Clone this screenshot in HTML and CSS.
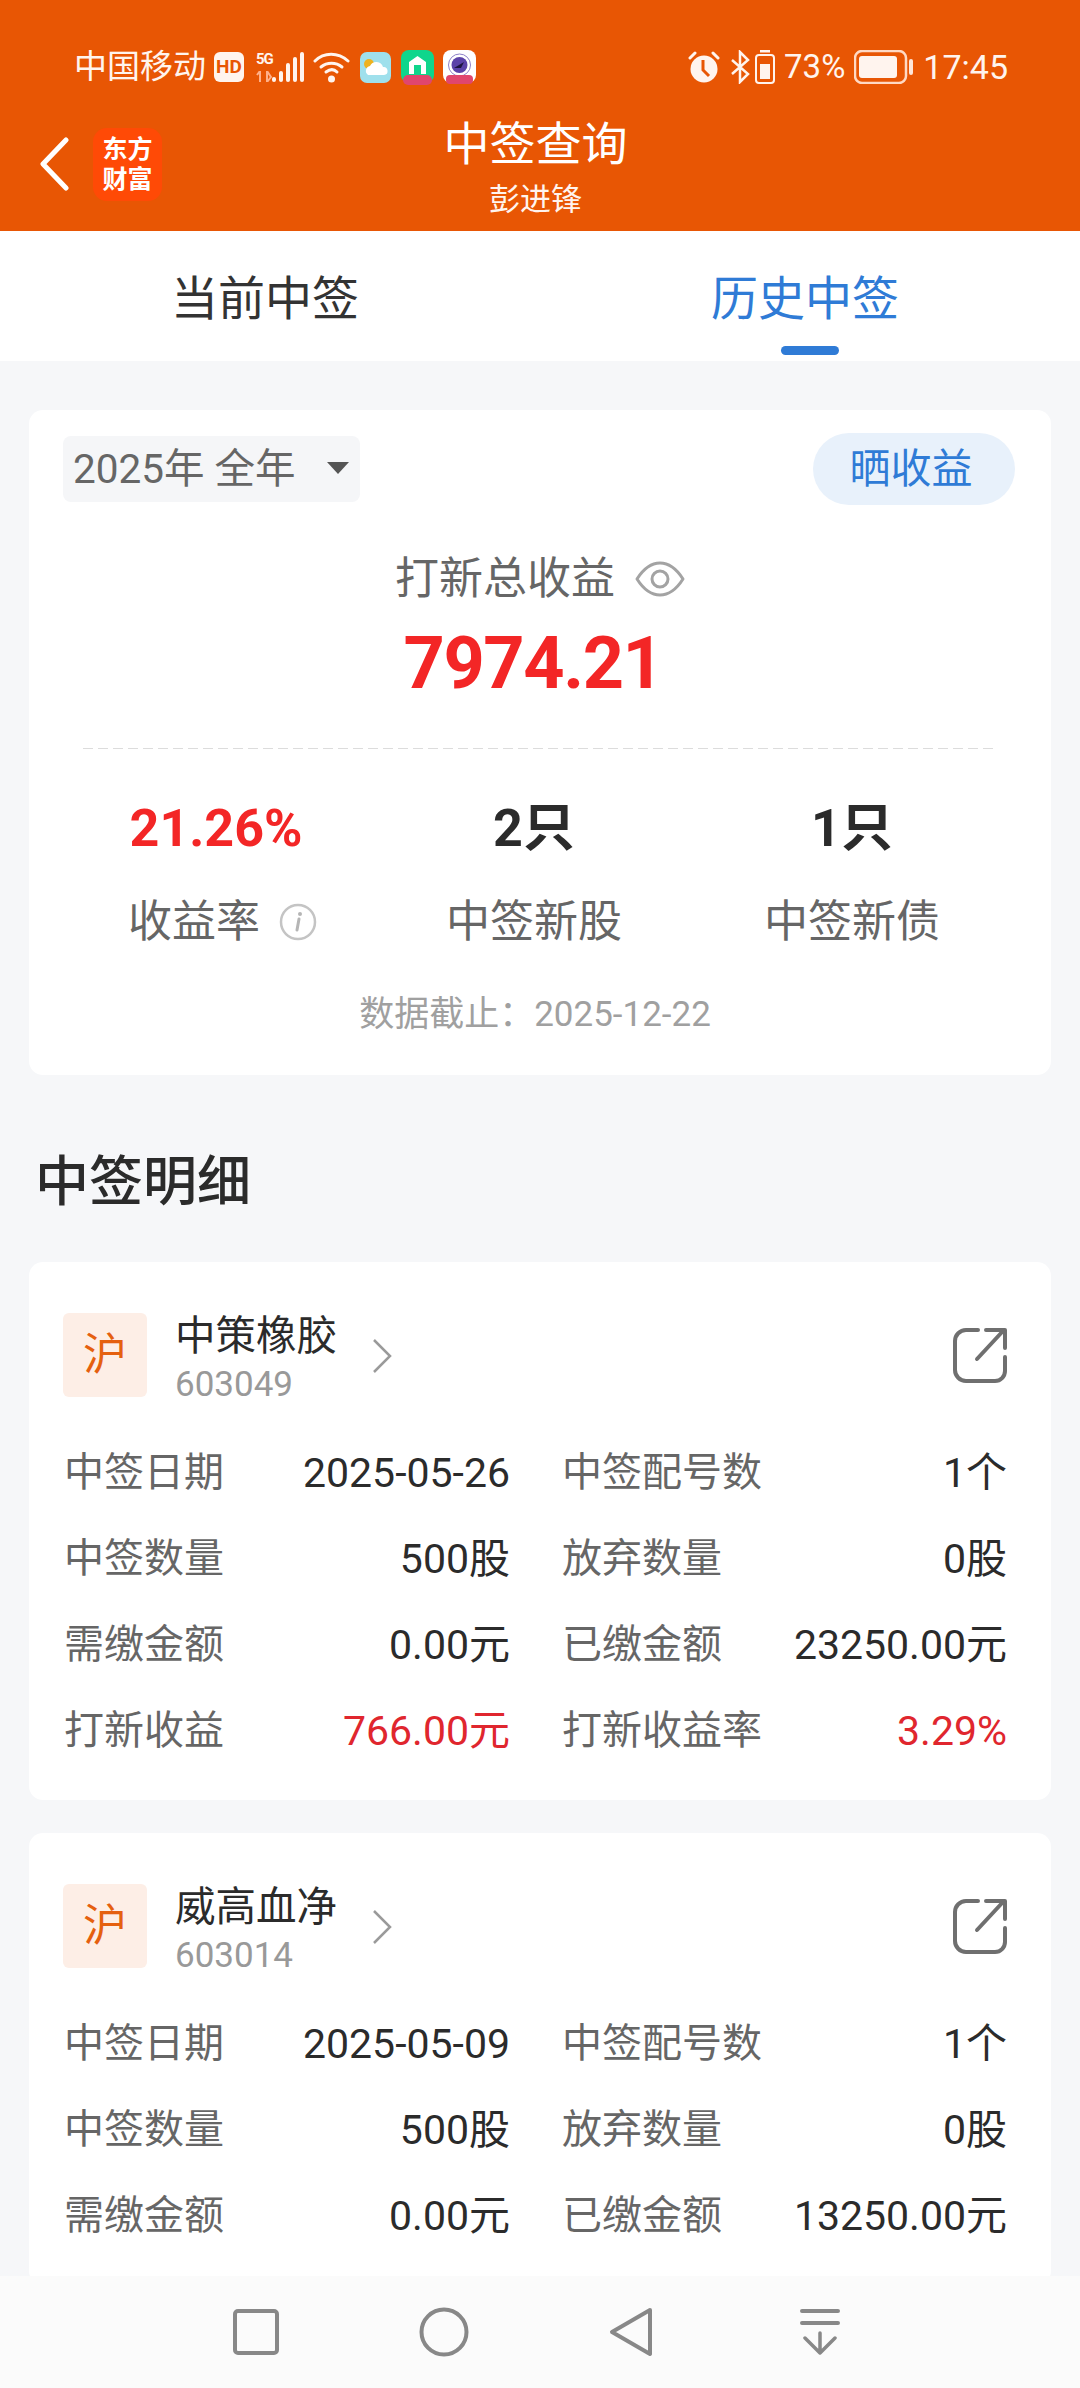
FILE: index.html
```html
<!DOCTYPE html>
<html lang="zh-CN">
<head>
  <meta charset="UTF-8">
  <title>中签查询</title>
  <link rel="stylesheet" href="styles.css">
</head>
<body>
  <header class="top">
    <div class="status">
      <div class="status-left">
        <span class="carrier">中国移动</span>
        <span class="hd">HD</span>
        <span class="net">
          <span class="net-5g">5G</span>
          <svg class="net-arrows" width="16" height="11" viewBox="0 0 16 11"><path d="M4 0v11M4 0L1 4M11 0v11l4-5z" fill="none" stroke="#ffb08a" stroke-width="2"/></svg>
        </span>
        <svg class="signal" width="33" height="32" viewBox="0 0 33 32"><g fill="#fff4ee"><rect x="0" y="26" width="4" height="5" rx="2"/><rect x="7" y="20" width="4" height="11" rx="2"/><rect x="14" y="12" width="4" height="19" rx="2"/><rect x="21" y="6" width="4" height="25" rx="2"/><rect x="28" y="1" width="4" height="30" rx="2"/></g></svg>
        <svg class="wifi" width="38" height="32" viewBox="0 0 38 32"><g fill="none" stroke="#fff4ee" stroke-width="3" stroke-linecap="round"><path d="M2 10C11 1 25 1 35 10"/><path d="M8 16c6-5 15-5 21 0"/></g><path d="M13 21c4-3 8-3 11 0" fill="none" stroke="#fff4ee" stroke-width="3" stroke-linecap="round"/><circle cx="18.500" cy="28" r="3.500" fill="#fff4ee"/></svg>
        <svg class="app" width="31" height="31" viewBox="0 0 31 31"><rect width="31" height="31" rx="7" fill="#9fe0ec"/><circle cx="9" cy="12" r="5" fill="#eeb21f"/><path d="M8 23a5 5 0 0 1 2-9 7 7 0 0 1 13 1 4 4 0 0 1 1 8z" fill="#fff"/></svg>
        <svg class="app app-b" width="33" height="35" viewBox="0 0 33 35"><rect width="33" height="33" rx="8" fill="#0fd68c"/><path d="M8 24V12l8.500-6 8.500 6v12h-5v-9h-7v9z" fill="#fff"/><rect x="2" y="25" width="29" height="10" rx="5" fill="#e0466e"/></svg>
        <svg class="app" width="33" height="34" viewBox="0 0 33 34"><rect width="33" height="33" rx="8" fill="#fff"/><circle cx="16.500" cy="15" r="11" fill="none" stroke="#8d80c8" stroke-width="1"/><circle cx="16.500" cy="15" r="8" fill="#5b42a8"/><path d="M11 18l10-6-3 6z" fill="#1d1440"/><rect x="3" y="25" width="27" height="9" rx="4" fill="#e0466e"/></svg>
      </div>
      <div class="status-right">
        <svg class="alarm" width="32" height="32" viewBox="0 0 32 32"><path d="M2 7l5-5M30 7l-5-5" stroke="#fff4ee" stroke-width="3" stroke-linecap="round"/><circle cx="16" cy="18" r="13.500" fill="#fff4ee"/><path d="M15 9v10l6 6" fill="none" stroke="#e85604" stroke-width="3"/></svg>
        <svg class="bt" width="19" height="34" viewBox="0 0 19 34"><path d="M1 10l16 14-8 8V2l8 8L1 24" fill="none" stroke="#fff4ee" stroke-width="2.500"/></svg>
        <svg class="minibat" width="20" height="34" viewBox="0 0 20 34"><rect x="5" y="0" width="10" height="2.500" fill="#fff4ee"/><rect x="1" y="5" width="18" height="28" rx="3" fill="none" stroke="#fff4ee" stroke-width="2"/><rect x="5" y="14" width="10" height="15" fill="#fff4ee"/></svg>
        <span class="pct">73%</span>
        <svg class="battery" width="60" height="34" viewBox="0 0 60 34"><rect x="1" y="1" width="51" height="32" rx="7" fill="none" stroke="#ffd9c4" stroke-width="2.500"/><rect x="5" y="6" width="38" height="22" rx="3" fill="#fff4ee"/><rect x="55" y="9" width="4" height="16" rx="2" fill="#ffe6d8"/></svg>
        <span class="clock">17:45</span>
      </div>
    </div>
    <div class="nav">
      <svg class="back" width="30" height="54" viewBox="0 0 30 54"><path d="M27 3L4 27l23 24" fill="none" stroke="#fff" stroke-width="5" stroke-linecap="round" stroke-linejoin="round"/></svg>
      <div class="logo">东方<br>财富</div>
      <div class="title">
        <div class="title-main">中签查询</div>
        <div class="title-sub">彭进锋</div>
      </div>
    </div>
  </header>

  <div class="tabs">
    <div class="tab">当前中签</div>
    <div class="tab active">历史中签</div>
  </div>

  <main class="content">
    <section class="card summary">
      <div class="summary-top">
        <div class="picker">2025年 全年<span class="caret"></span></div>
        <div class="share">晒收益</div>
      </div>
      <div class="total-label">打新总收益
        <svg class="eye" width="50" height="36" viewBox="0 0 50 36"><path d="M2 18C9 7 17 2 25 2s16 5 23 16c-7 11-15 16-23 16S9 29 2 18z" fill="none" stroke="#a3a3a3" stroke-width="3" stroke-linejoin="round"/><circle cx="25" cy="18" r="8" fill="none" stroke="#a3a3a3" stroke-width="3"/></svg>
      </div>
      <div class="total-value">7974.21</div>
      <div class="divider"></div>
      <div class="stats">
        <div class="stat">
          <div class="stat-value red">21.26%</div>
          <div class="stat-label stat-label-info">收益率
            <svg class="info" width="38" height="38" viewBox="0 0 38 38"><circle cx="19" cy="19" r="17" fill="none" stroke="#c4c4c4" stroke-width="2.500"/><path d="M20 16l-2 11" stroke="#b5b5b5" stroke-width="3" stroke-linecap="round"/><circle cx="21" cy="11" r="2" fill="#b5b5b5"/></svg>
          </div>
        </div>
        <div class="stat">
          <div class="stat-value">2只</div>
          <div class="stat-label">中签新股</div>
        </div>
        <div class="stat">
          <div class="stat-value">1只</div>
          <div class="stat-label">中签新债</div>
        </div>
      </div>
      <div class="note">数据截止：2025-12-22</div>
    </section>

    <h2 class="section-title">中签明细</h2>

    <section class="card stock">
      <div class="stock-head">
        <div class="market">沪</div>
        <div class="stock-info">
          <div class="stock-name">中策橡胶</div>
          <div class="stock-code">603049</div>
        </div>
        <svg class="more" width="22" height="36" viewBox="0 0 22 36"><path d="M3 2l16 16L3 34" fill="none" stroke="#9a9a9a" stroke-width="2.500"/></svg>
        <svg class="open" width="56" height="58" viewBox="0 0 56 58"><path d="M26 4H14A11 11 0 0 0 3 15v29a11 11 0 0 0 11 11h29a10 10 0 0 0 10-10V31" fill="none" stroke="#6f6f6f" stroke-width="4" stroke-linecap="round"/><path d="M25 33L51 5M34 4h19v18" fill="none" stroke="#6f6f6f" stroke-width="4" stroke-linecap="round" stroke-linejoin="round"/></svg>
      </div>
      <div class="rows">
        <span class="label">中签日期</span><span class="val">2025-05-26</span><span class="label label-b">中签配号数</span><span class="val">1个</span>
        <span class="label">中签数量</span><span class="val">500股</span><span class="label label-b">放弃数量</span><span class="val">0股</span>
        <span class="label">需缴金额</span><span class="val">0.00元</span><span class="label label-b">已缴金额</span><span class="val">23250.00元</span>
        <span class="label">打新收益</span><span class="val red">766.00元</span><span class="label label-b">打新收益率</span><span class="val red">3.29%</span>
      </div>
    </section>

    <section class="card stock">
      <div class="stock-head">
        <div class="market">沪</div>
        <div class="stock-info">
          <div class="stock-name">威高血净</div>
          <div class="stock-code">603014</div>
        </div>
        <svg class="more" width="22" height="36" viewBox="0 0 22 36"><path d="M3 2l16 16L3 34" fill="none" stroke="#9a9a9a" stroke-width="2.500"/></svg>
        <svg class="open" width="56" height="58" viewBox="0 0 56 58"><path d="M26 4H14A11 11 0 0 0 3 15v29a11 11 0 0 0 11 11h29a10 10 0 0 0 10-10V31" fill="none" stroke="#6f6f6f" stroke-width="4" stroke-linecap="round"/><path d="M25 33L51 5M34 4h19v18" fill="none" stroke="#6f6f6f" stroke-width="4" stroke-linecap="round" stroke-linejoin="round"/></svg>
      </div>
      <div class="rows">
        <span class="label">中签日期</span><span class="val">2025-05-09</span><span class="label label-b">中签配号数</span><span class="val">1个</span>
        <span class="label">中签数量</span><span class="val">500股</span><span class="label label-b">放弃数量</span><span class="val">0股</span>
        <span class="label">需缴金额</span><span class="val">0.00元</span><span class="label label-b">已缴金额</span><span class="val">13250.00元</span>
      </div>
    </section>
  </main>

  <footer class="sysbar">
    <svg width="46" height="46" viewBox="0 0 46 46"><rect x="2" y="2" width="42" height="42" rx="3" fill="none" stroke="#888" stroke-width="4"/></svg>
    <svg width="50" height="50" viewBox="0 0 50 50"><circle cx="25" cy="25" r="22.500" fill="none" stroke="#888" stroke-width="4"/></svg>
    <svg class="sys-back" width="44" height="50" viewBox="0 0 44 50"><path d="M41 3L3 25l38 22z" fill="none" stroke="#888" stroke-width="4" stroke-linejoin="round"/></svg>
    <svg width="42" height="46" viewBox="0 0 42 46"><path d="M3 2h36M3 14h36" stroke="#888" stroke-width="4" stroke-linecap="round"/><path d="M21 24v20M6 29l15 15 15-15" fill="none" stroke="#888" stroke-width="3.500" stroke-linecap="round" stroke-linejoin="round"/></svg>
  </footer>
</body>
</html>
```

FILE: styles.css
```css
* {
  box-sizing: border-box;
}
html,
body {
  margin: 0;
  height: 2388px;
}
body {
  width: 1080px;
  display: flex;
  flex-direction: column;
  overflow: hidden;
  background-color: #f6f7f9;
  font-family: Roboto, "Noto Sans CJK SC", sans-serif;
  color: #2b2b2b;
}
svg {
  display: block;
  flex: none;
}

/* top bar */
.top {
  height: 231px;
  flex: none;
  padding-top: 47px;
  background-color: #e85604;
  color: #fff4ee;
}
.status {
  height: 40px;
  display: flex;
  justify-content: space-between;
  align-items: center;
  padding: 0 72px 0 74px;
}
.status-left,
.status-right {
  display: flex;
  align-items: center;
}
.carrier {
  font-size: 33px;
  line-height: 40px;
}
.hd {
  width: 30px;
  height: 30px;
  margin-left: 8px;
  border-radius: 6px;
  background-color: #fff4ee;
  color: #e85604;
  font-size: 19px;
  font-weight: 700;
  line-height: 30px;
  text-align: center;
}
.net {
  width: 16px;
  margin-left: 12px;
  display: flex;
  flex-direction: column;
  gap: 4px;
}
.net-5g {
  font-size: 15px;
  font-weight: 700;
  letter-spacing: -1px;
  line-height: 15px;
  white-space: nowrap;
}
.wifi {
  margin-left: 8px;
}
.status-left .app {
  margin-left: 9px;
}
.status-left .app-b {
  margin-left: 10px;
}
.status-right .bt {
  margin-left: 11px;
}
.minibat {
  margin-left: 5px;
}
.pct,
.clock {
  font-size: 33px;
  line-height: 40px;
}
.clock {
  font-size: 34px;
}
.pct {
  margin-left: 9px;
}
.battery {
  margin-left: 9px;
}
.clock {
  margin-left: 9px;
}

.nav {
  position: relative;
  height: 144px;
  display: flex;
  align-items: center;
  padding: 10px 0 0 39px;
}
.logo {
  width: 69px;
  height: 73px;
  margin-left: 24px;
  padding-top: 7px;
  border-radius: 14px;
  background-color: #ff4a06;
  color: #fff;
  font-size: 25px;
  font-weight: 700;
  line-height: 30px;
  text-align: center;
}
.title {
  position: absolute;
  left: 0;
  right: 9px;
  top: 24px;
  text-align: center;
  color: #fff;
}
.title-main {
  font-size: 46px;
  line-height: 66px;
}
.title-sub {
  margin-top: 3px;
  font-size: 31px;
  line-height: 40px;
  color: #fff4ee;
}

/* tabs */
.tabs {
  height: 130px;
  flex: none;
  display: flex;
  background-color: #fff;
}
.tab {
  position: relative;
  width: 50%;
  padding-top: 38px;
  font-size: 47px;
  line-height: 60px;
  text-align: center;
  color: #333;
}
.tab:first-child {
  padding-right: 10px;
}
.tab.active {
  padding-right: 10px;
  color: #2f7bd6;
}
.tab.active:after {
  content: "";
  position: absolute;
  left: 241px;
  bottom: 6px;
  width: 58px;
  height: 9px;
  border-radius: 5px;
  background-color: #2f7bd6;
}

/* content */
.content {
  flex: 1;
  min-height: 0;
  overflow: hidden;
  padding: 49px 29px 0;
}
.card {
  border-radius: 14px;
  background-color: #fff;
}
.summary {
  padding: 23px 34px 35px;
}
.summary-top {
  display: flex;
  justify-content: space-between;
  align-items: center;
}
.picker {
  width: 297px;
  height: 66px;
  padding-left: 10px;
  border-radius: 8px;
  background-color: #f5f6f8;
  color: #666;
  font-size: 40.500px;
  line-height: 66px;
  position: relative;
}
.caret {
  position: absolute;
  right: 11px;
  top: 26px;
  border-style: solid;
  border-width: 12px 11px 0;
  border-color: #555 transparent transparent;
}
.share {
  width: 202px;
  height: 72px;
  margin-right: 2px;
  padding-right: 6px;
  border-radius: 36px;
  background-color: #e8f1fb;
  color: #2f7bd6;
  font-size: 41px;
  line-height: 72px;
  text-align: center;
}
.total-label {
  margin-top: 44px;
  display: flex;
  justify-content: center;
  align-items: center;
  gap: 20px;
  color: #666;
  font-size: 44px;
  line-height: 60px;
}
.total-value {
  margin-top: 10px;
  padding-right: 14px;
  color: #f32626;
  font-size: 72px;
  font-weight: 700;
  letter-spacing: -1.400px;
  line-height: 90px;
  text-align: center;
}
.divider {
  height: 1px;
  margin: 39px 20px 0;
  background-image: repeating-linear-gradient(90deg, #dcdcdc 0 10px, transparent 10px 15px);
}
.stats {
  margin: 50px 0 0 -6px;
  display: grid;
  grid-template-columns: repeat(3, 318px);
}
.stat {
  text-align: center;
}
.stat-value {
  font-size: 52px;
  font-weight: 700;
  line-height: 60px;
}
.stat-value.red {
  color: #f32626;
}
.stat-label {
  margin-top: 33px;
  display: flex;
  justify-content: center;
  align-items: center;
  gap: 19px;
  color: #666;
  font-size: 44px;
  line-height: 60px;
}
.stat-label-info {
  padding-left: 13px;
}
.note {
  margin-top: 38px;
  padding-right: 10px;
  color: #a0a0a0;
  font-size: 35px;
  line-height: 50px;
  text-align: center;
}
.section-title {
  margin: 73px 0 44px 6px;
  font-size: 54px;
  font-weight: 500;
  line-height: 70px;
}

/* stock cards */
.stock {
  margin-bottom: 33px;
  padding: 51px 0 26px 34px;
}
.stock-head {
  height: 84px;
  display: flex;
  align-items: center;
}
.market {
  width: 84px;
  height: 84px;
  border-radius: 6px;
  background-color: #fdeee6;
  color: #e5600f;
  font-size: 44px;
  line-height: 84px;
  text-align: center;
}
.stock-info {
  margin-left: 28px;
  margin-top: 5px;
  width: 196px;
  display: flex;
  flex-direction: column;
  gap: 4px;
}
.stock-name {
  font-size: 40.500px;
  line-height: 50px;
}
.stock-code {
  color: #999;
  font-size: 35px;
  line-height: 40px;
}
.more {
  margin-top: 2px;
}
.open {
  margin-left: auto;
  margin-right: 43px;
}
.rows {
  margin-top: 33px;
  display: grid;
  grid-template-columns: 214px 233px 267px 1fr;
  grid-auto-rows: 86px;
  align-items: center;
  font-size: 41px;
  line-height: 50px;
}
.label {
  margin-left: 1px;
  color: #666;
  font-size: 40px;
  white-space: nowrap;
}
.label-b {
  margin-left: 52px;
}
.val {
  text-align: right;
  white-space: nowrap;
}
.val:nth-child(4n) {
  padding-right: 44px;
}
.val.red {
  color: #e0262e;
}

/* system bar */
.sysbar {
  height: 112px;
  flex: none;
  display: grid;
  grid-template-columns: repeat(4, 188px);
  justify-content: center;
  justify-items: center;
  align-items: center;
  padding-right: 5px;
  background-color: #fbfbfb;
}
.sys-back {
  margin-right: 2px;
}
```
